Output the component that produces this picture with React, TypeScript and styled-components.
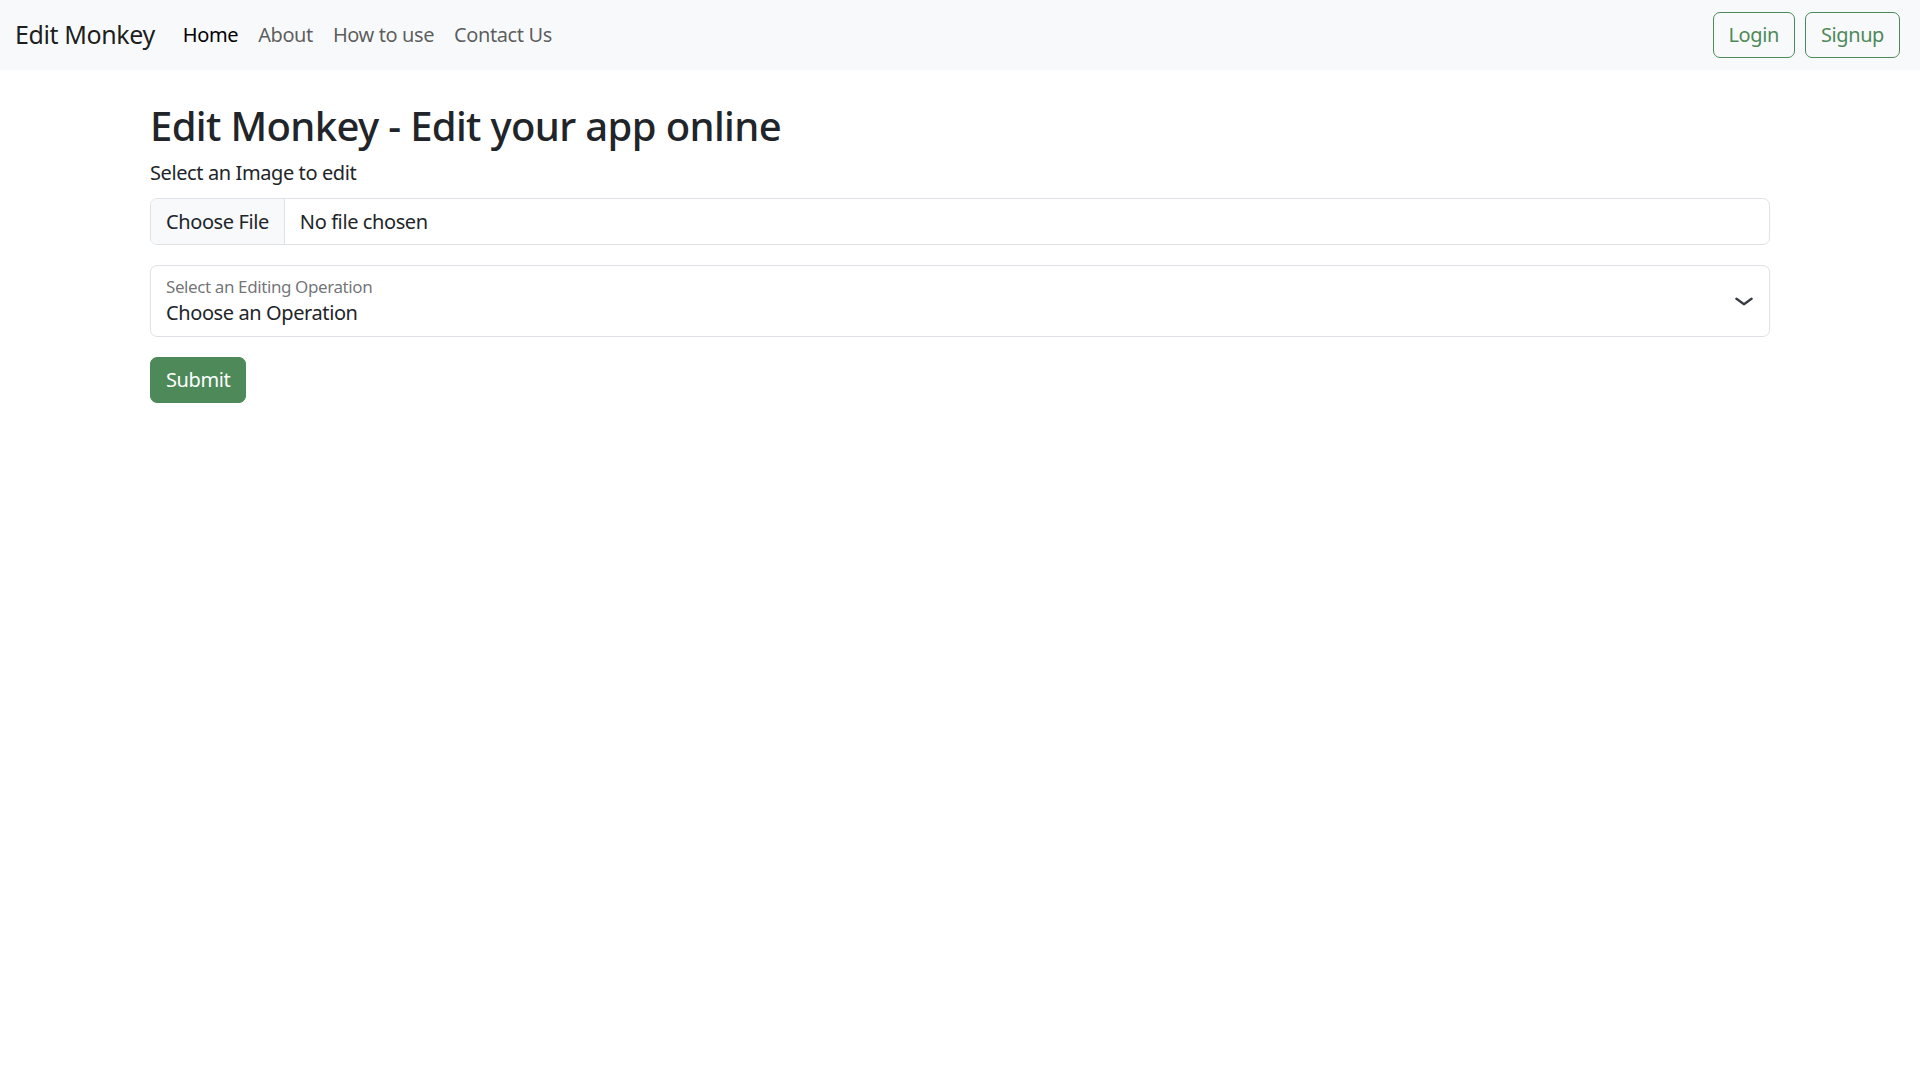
import React from "react";
import styled, { createGlobalStyle } from "styled-components";

const GREEN = "#4d8959";

const GlobalStyle = createGlobalStyle`
  * {
    box-sizing: border-box;
  }
  body {
    margin: 0;
    background: #fff;
    color: #212529;
    font-family: "Noto Sans", "Open Sans", sans-serif;
    font-size: 20px;
    line-height: 1.5;
    letter-spacing: -0.02em;
  }
`;

function App() {
  return (
    <>
      <GlobalStyle />
      <S.Navbar>
        <S.Brand href="#">Edit Monkey</S.Brand>
        <S.NavList>
          <li>
            <S.NavLink href="#" $active>
              Home
            </S.NavLink>
          </li>
          <li>
            <S.NavLink href="#">About</S.NavLink>
          </li>
          <li>
            <S.NavLink href="#">How to use</S.NavLink>
          </li>
          <li>
            <S.NavLink href="#">Contact Us</S.NavLink>
          </li>
        </S.NavList>
        <S.AuthButtons>
          <S.OutlineButton>Login</S.OutlineButton>
          <S.OutlineButton>Signup</S.OutlineButton>
        </S.AuthButtons>
      </S.Navbar>

      <S.Container>
        <S.Title>Edit Monkey - Edit your app online</S.Title>
        <S.Label>Select an Image to edit</S.Label>
        <S.FileInput>
          <S.FileButton>Choose File</S.FileButton>
          <S.FileName>No file chosen</S.FileName>
        </S.FileInput>

        <S.SelectBox>
          <S.SelectText>
            <S.FloatLabel>Select an Editing Operation</S.FloatLabel>
            <S.SelectValue>Choose an Operation</S.SelectValue>
          </S.SelectText>
          <svg width="20" height="15" viewBox="0 0 16 16" preserveAspectRatio="none">
            <path
              d="m2 5 6 6 6-6"
              fill="none"
              stroke="#343a40"
              strokeWidth="2.2"
              strokeLinecap="round"
              strokeLinejoin="round"
            />
          </svg>
        </S.SelectBox>

        <S.SubmitButton>Submit</S.SubmitButton>
      </S.Container>
    </>
  );
}

//@styled
const S = {
  Navbar: styled.nav`
    height: 70px;
    background: #f8f9fa;
    display: flex;
    align-items: center;
    padding: 0 20px 0 15px;
  `,
  Brand: styled.a`
    font-size: 25px;
    color: rgba(0, 0, 0, 0.9);
    text-decoration: none;
    margin-right: 18px;
  `,
  NavList: styled.ul`
    display: flex;
    list-style: none;
    margin: 0;
    padding: 0;
  `,
  NavLink: styled.a<{ $active?: boolean }>`
    display: block;
    padding: 10px;
    font-size: 20px;
    text-decoration: none;
    color: ${({ $active }) => ($active ? "#000" : "rgba(0, 0, 0, 0.65)")};
  `,
  AuthButtons: styled.div`
    margin-left: auto;
    display: flex;
    gap: 10px;
  `,
  OutlineButton: styled.button`
    font-family: inherit;
    font-size: 20px;
    letter-spacing: inherit;
    line-height: 1.5;
    padding: 7px 15px;
    background: transparent;
    color: ${GREEN};
    border: 1px solid ${GREEN};
    border-radius: 7px;
    cursor: pointer;
  `,
  Container: styled.main`
    max-width: 1620px;
    margin: 32px auto 0;
  `,
  Title: styled.h2`
    font-size: 40px;
    font-weight: 500;
    line-height: 1.2;
    letter-spacing: -0.016em;
    margin: 0 0 8px;
  `,
  Label: styled.label`
    display: block;
    margin-bottom: 10px;
  `,
  FileInput: styled.div`
    display: flex;
    align-items: stretch;
    height: 47px;
    border: 1px solid #dee2e6;
    border-radius: 7px;
    overflow: hidden;
    margin-bottom: 20px;
  `,
  FileButton: styled.div`
    display: flex;
    align-items: center;
    padding: 0 15px;
    background: #f8f9fa;
    border-right: 1px solid #dee2e6;
  `,
  FileName: styled.div`
    display: flex;
    align-items: center;
    padding-left: 15px;
  `,
  SelectBox: styled.div`
    display: flex;
    align-items: center;
    justify-content: space-between;
    height: 72px;
    border: 1px solid #dee2e6;
    border-radius: 7px;
    padding: 0 15px;
    margin-bottom: 20px;
  `,
  SelectText: styled.div`
    display: flex;
    flex-direction: column;
    padding-top: 3px;
  `,
  FloatLabel: styled.span`
    font-size: 17px;
    line-height: 20px;
    color: rgba(33, 37, 41, 0.65);
  `,
  SelectValue: styled.span`
    line-height: 30px;
    margin-top: 1px;
  `,
  SubmitButton: styled.button`
    font-family: inherit;
    font-size: 20px;
    letter-spacing: inherit;
    line-height: 1.5;
    padding: 7px 15px;
    background: ${GREEN};
    color: #fff;
    border: 1px solid ${GREEN};
    border-radius: 7px;
    cursor: pointer;
  `,
};

export default App;
